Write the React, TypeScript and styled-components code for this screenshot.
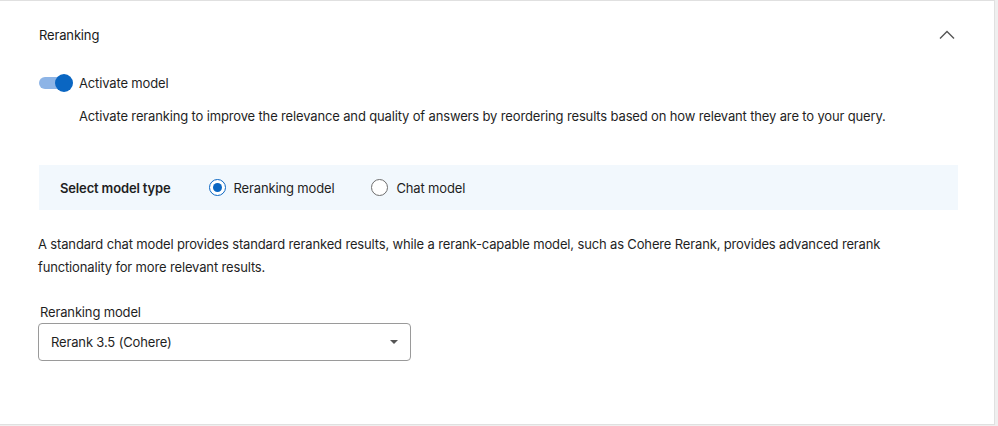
import React from "react";
import styled, { createGlobalStyle } from "styled-components";

const Global = createGlobalStyle`
  html, body { margin: 0; padding: 0; background: #efefef; }
  body { font-family: Inter, "Noto Sans", "Liberation Sans", sans-serif; color: #1f1f1f; -webkit-font-smoothing: antialiased; letter-spacing: -0.15px; }
  * { box-sizing: border-box; }
`;

const Card = styled.section`
  width: 996px;
  height: 425px;
  margin-left: -1px;
  background: #fff;
  border: 1px solid #e0e0e0;
  padding: 0 36px 0 39px;
  display: flex;
  flex-direction: column;
`;

const Header = styled.div`
  height: 67px;
  display: flex;
  align-items: center;
  justify-content: space-between;
  padding-right: 2px;
`;

const Title = styled.h2`
  margin: 0;
  font-size: 13px;
  font-weight: 400;
  color: #1a1a1a;
`;

const IconBtn = styled.button`
  border: 0;
  background: none;
  padding: 0;
  width: 18px;
  height: 18px;
  display: flex;
  align-items: center;
  justify-content: center;
  color: #555;
`;

const ToggleRow = styled.label`
  display: flex;
  align-items: center;
  gap: 7px;
  height: 30px;
  font-size: 13px;
`;

const Track = styled.span`
  position: relative;
  width: 33px;
  height: 12px;
  border-radius: 6px;
  background: #8db4e6;
  display: inline-block;
`;

const Knob = styled.span`
  position: absolute;
  right: -1px;
  top: -3px;
  width: 18px;
  height: 18px;
  border-radius: 50%;
  background: #0a66c2;
`;

const Description = styled.p`
  margin: 8px 0 0 40px;
  font-size: 13px;
  line-height: 20px;
  color: #1f1f1f;
`;

const Panel = styled.div`
  margin-top: 39px;
  height: 45px;
  background: #f2f8fd;
  display: flex;
  align-items: center;
  padding-left: 21px;
  font-size: 13px;
`;

const PanelLabel = styled.span`
  font-weight: 600;
  color: #1f1f1f;
  margin-right: 38px;
`;

const RadioOption = styled.label`
  display: flex;
  align-items: center;
  gap: 8px;
  margin-right: 37px;
`;

const RadioCircle = styled.span<{ $checked?: boolean }>`
  width: 17px;
  height: 17px;
  border-radius: 50%;
  border: 1px solid ${(p) => (p.$checked ? "#0a66c2" : "#6e6e6e")};
  background: #fff;
  display: flex;
  align-items: center;
  justify-content: center;
  &::after {
    content: "";
    width: 9px;
    height: 9px;
    border-radius: 50%;
    background: #0a66c2;
    display: ${(p) => (p.$checked ? "block" : "none")};
  }
`;

const Paragraph = styled.p`
  margin: 23px 0 0 -1px;
  font-size: 13px;
  line-height: 23px;
  color: #1f1f1f;
  max-width: 880px;
`;

const Field = styled.div`
  margin-top: 24px;
  display: flex;
  flex-direction: column;
  gap: 2px;
`;

const FieldLabel = styled.label`
  font-size: 13px;
  margin-left: 1px;
  line-height: 18px;
`;

const Select = styled.div`
  width: 373px;
  height: 38px;
  margin-left: -1px;
  border: 1px solid #9a9a9a;
  border-radius: 4px;
  display: flex;
  align-items: center;
  justify-content: space-between;
  padding: 0 12px 0 12px;
  font-size: 13px;
`;

const Caret = styled.span`
  width: 0;
  height: 0;
  border-left: 4px solid transparent;
  border-right: 4px solid transparent;
  border-top: 4px solid #555;
`;

export default function App() {
  return (
    <>
      <Global />
      <Card>
        <Header>
          <Title>Reranking</Title>
          <IconBtn aria-label="Collapse">
            <svg width="16" height="10" viewBox="0 0 16 10" fill="none">
              <path d="M1 8.5 L8 1.5 L15 8.5" stroke="#555" strokeWidth="1.4" />
            </svg>
          </IconBtn>
        </Header>
        <ToggleRow>
          <Track>
            <Knob />
          </Track>
          Activate model
        </ToggleRow>
        <Description>
          Activate reranking to improve the relevance and quality of answers by reordering results based on how relevant they are to your query.
        </Description>
        <Panel>
          <PanelLabel>Select model type</PanelLabel>
          <RadioOption>
            <RadioCircle $checked />
            Reranking model
          </RadioOption>
          <RadioOption>
            <RadioCircle />
            Chat model
          </RadioOption>
        </Panel>
        <Paragraph>
          A standard chat model provides standard reranked results, while a rerank-capable model, such as Cohere Rerank, provides advanced rerank functionality for more relevant results.
        </Paragraph>
        <Field>
          <FieldLabel>Reranking model</FieldLabel>
          <Select>
            Rerank 3.5 (Cohere)
            <Caret />
          </Select>
        </Field>
      </Card>
    </>
  );
}
